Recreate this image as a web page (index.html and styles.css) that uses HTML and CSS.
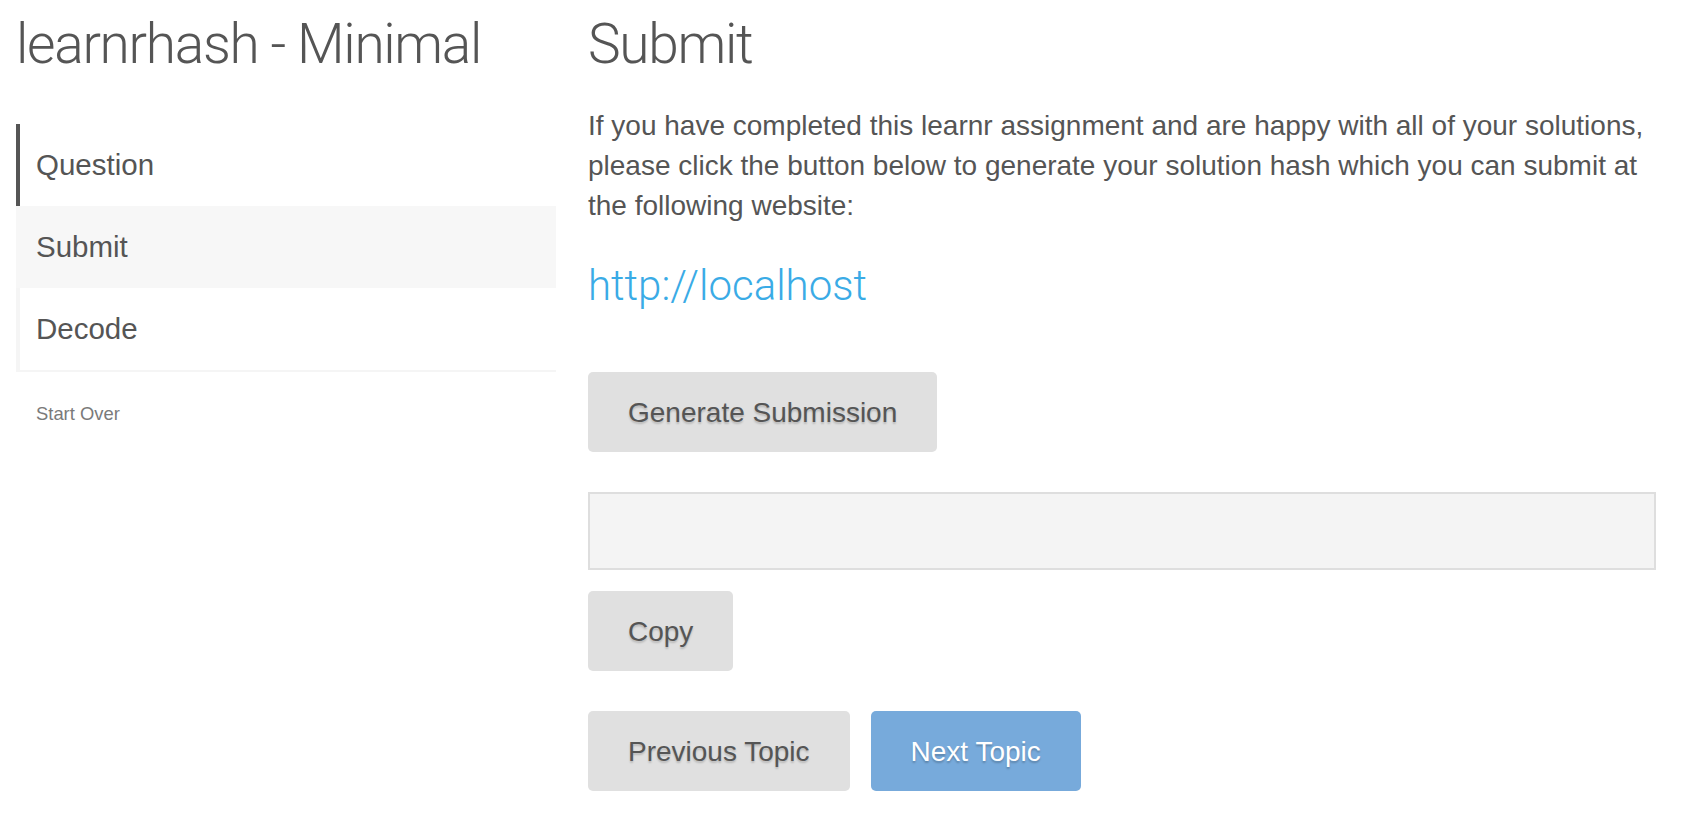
FILE: index.html
```html
<!DOCTYPE html>
<html lang="en">
<head>
<meta charset="utf-8">
<title>learnrhash - Minimal</title>
<link rel="stylesheet" href="styles.css">
</head>
<body>
<div class="page">
  <aside class="sidebar">
    <div class="site-title">learnrhash - Minimal</div>
    <ul class="toc">
      <li class="toc-item done">Question</li>
      <li class="toc-item current">Submit</li>
      <li class="toc-item last">Decode</li>
    </ul>
    <a class="start-over" href="#">Start Over</a>
  </aside>
  <main class="content">
    <h2 class="topic-title">Submit</h2>
    <p class="intro">If you have completed this learnr assignment and are happy with all of your solutions, please click the button below to generate your solution hash which you can submit at the following website:</p>
    <a class="site-link" href="#">http://localhost</a>
    <button class="btn btn-generate">Generate Submission</button>
    <div class="hash-box"></div>
    <button class="btn btn-copy">Copy</button>
    <div class="topic-nav">
      <button class="btn">Previous Topic</button>
      <button class="btn btn-primary">Next Topic</button>
    </div>
  </main>
</div>
</body>
</html>
```

FILE: styles.css
```css
html, body {
  margin: 0;
  padding: 0;
  background: #ffffff;
}

body {
  font-family: "Liberation Sans", Arial, sans-serif;
  color: #555555;
}

.page {
  display: grid;
  grid-template-columns: 540px 1068px;
  column-gap: 32px;
  padding: 12px 32px 0 16px;
}

.sidebar {
  display: flex;
  flex-direction: column;
  align-items: flex-start;
}

.site-title,
.topic-title {
  font-family: "Roboto", "Liberation Sans", sans-serif;
  font-weight: 300;
  font-size: 55px;
  letter-spacing: -1.3px;
  line-height: 64px;
  color: #555555;
  margin: 0;
  white-space: nowrap;
}

.toc {
  list-style: none;
  margin: 48px 0 0 0;
  padding: 0;
  width: 540px;
}

.toc-item {
  height: 82px;
  line-height: 82px;
  font-size: 29.5px;
  padding-left: 16px;
  border-left: 4px solid #f5f5f5;
  color: #555555;
}

.toc-item.done {
  border-left-color: #555555;
}

.toc-item.current {
  background: #f7f7f7;
  border-left-color: #f7f7f7;
}

.toc-item.last {
  border-bottom: 2px solid #f5f5f5;
}

.start-over {
  margin: 29px 0 0 20px;
  font-size: 18.4px;
  line-height: 26px;
  color: #7a7a7a;
  text-decoration: none;
}

.content {
  display: flex;
  flex-direction: column;
  align-items: flex-start;
}

.intro {
  margin: 30px 0 0 0;
  font-size: 28px;
  line-height: 40px;
  color: #555555;
}

.site-link {
  margin-top: 36px;
  font-family: "Roboto", "Liberation Sans", sans-serif;
  font-weight: 300;
  font-size: 42px;
  line-height: 48px;
  color: #3aabe6;
  text-decoration: none;
}

.btn {
  font-family: "Liberation Sans", Arial, sans-serif;
  font-size: 28px;
  line-height: 40px;
  height: 80px;
  padding: 21px 40px 19px;
  border: none;
  border-radius: 5px;
  background: #e0e0e0;
  color: #555555;
  text-shadow: 0 2px 2px rgba(0, 0, 0, 0.18);
  cursor: pointer;
}

.btn-generate {
  margin-top: 62px;
}

.hash-box {
  margin-top: 40px;
  width: 1068px;
  height: 78px;
  box-sizing: border-box;
  border: 2px solid #dedede;
  background: #f4f4f4;
}

.btn-copy {
  margin-top: 21px;
}

.topic-nav {
  display: flex;
  gap: 21px;
  margin-top: 40px;
}

.btn-primary {
  background: #77aadb;
  color: #ffffff;
  text-shadow: 0 2px 2px rgba(0, 0, 0, 0.22);
}
```
